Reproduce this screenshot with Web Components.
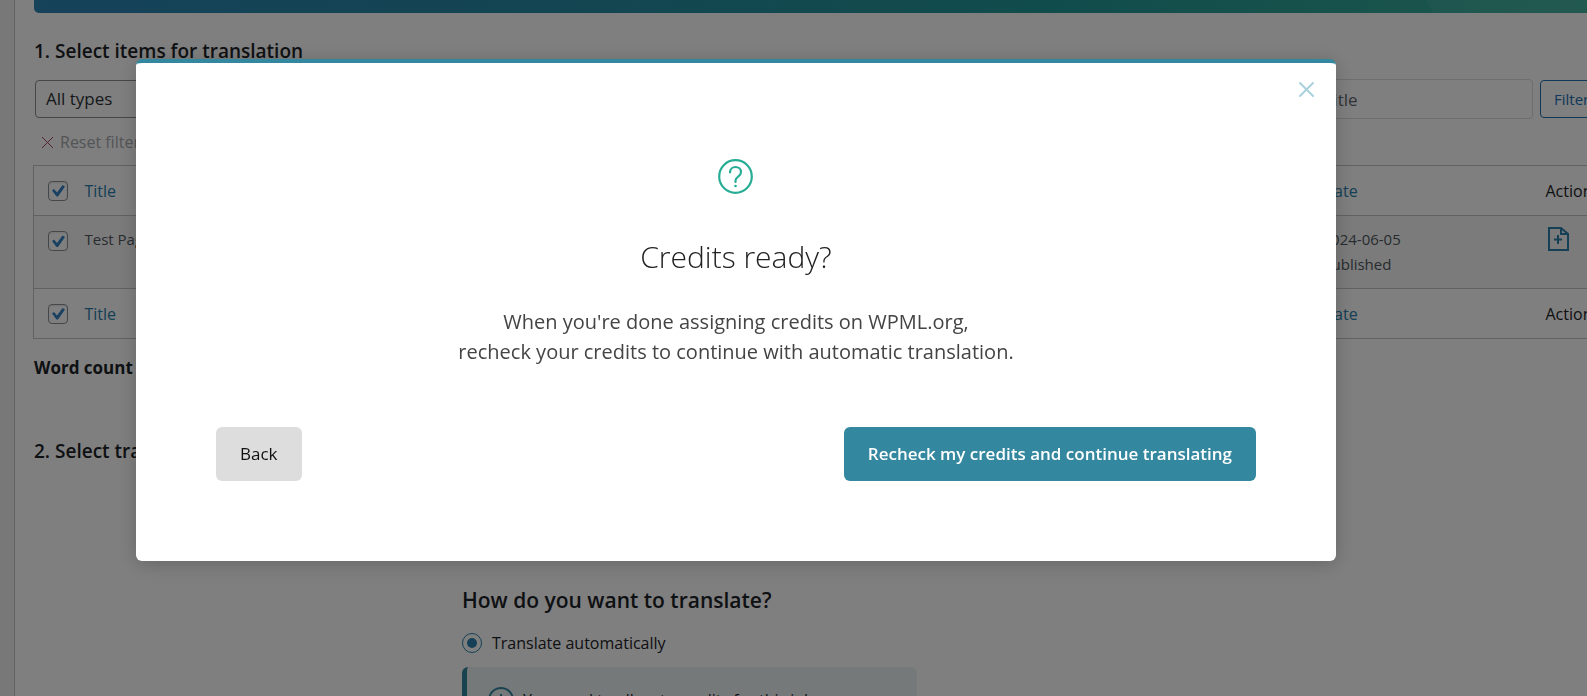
<!DOCTYPE html>
<html lang="en">
<head>
<meta charset="utf-8">
<title>Translation Management</title>
<style>
  html, body {
    margin: 0;
    height: 100%;
    overflow: hidden;
  }
  body {
    background: #f0f0f1;
    color: #1d2327;
    font: 400 16px/24px "Open Sans", "Noto Sans", sans-serif;
  }
</style>
</head>
<body>
<tm-dashboard>
  <tm-section heading="1. Select items for translation">
    <tm-filters></tm-filters>
    <tm-items></tm-items>
  </tm-section>
  <tm-section class="step" heading="2. Select translation">
    <tm-method>
      <tm-notice>You need to allocate credits for this job</tm-notice>
    </tm-method>
  </tm-section>
</tm-dashboard>

<wpml-modal heading="Credits ready?">
  When you're done assigning credits on WPML.org,<br>
  recheck your credits to continue with automatic translation.
  <wpml-button slot="actions">Back</wpml-button>
  <wpml-button slot="actions" variant="primary">Recheck my credits and continue translating</wpml-button>
</wpml-modal>

<script>
class BaseElement extends HTMLElement {
    constructor() {
        super();
        this.attachShadow({ mode: 'open' });
        const template = document.createElement('template');
        template.innerHTML = this.constructor.markup;
        this.shadowRoot.appendChild(template.content.cloneNode(true));
    }
}

class TmDashboard extends BaseElement {
    static markup = `
      <style>
        :host {
          display: flex;
          height: 100%;
          overflow: hidden;
        }
        .gutter {
          flex: 0 0 14px;
          border-right: 1px solid #c3c4c7;
        }
        /* the board is wider than the window, as the item table is */
        main {
          flex: 1;
          min-width: 0;
          margin-right: -48px;
          padding-left: 19px;
          background: #fff;
        }
        .banner {
          height: 13px;
          border-radius: 0 0 5px 5px;
          background:
            linear-gradient(60deg, transparent 87%, rgba(255, 255, 255, 0.05) 87%),
            linear-gradient(90deg, #2c84b4 0%, #278aa5 30%, #239a98 65%, #3db09a 100%);
        }
        ::slotted(.step) {
          margin-top: 59px;
        }
      </style>
      <div class="gutter"></div>
      <main>
        <div class="banner"></div>
        <slot></slot>
      </main>
    `;
}

class TmSection extends BaseElement {
    static markup = `
      <style>
        :host {
          display: block;
          margin-top: 26px;
        }
        h2 {
          margin: 0;
          font-size: 19px;
          font-weight: 600;
          line-height: 24px;
        }
      </style>
      <h2></h2>
      <slot></slot>
    `;

    connectedCallback() {
        this.shadowRoot.querySelector('h2').textContent = this.getAttribute('heading');
    }
}

class TmFilters extends BaseElement {
    static markup = `
      <style>
        :host {
          display: block;
          margin-top: 16px;
        }
        .row {
          display: flex;
          align-items: center;
          gap: 7px;
        }
        select, input, .filter {
          box-sizing: border-box;
          height: 38px;
          border-radius: 4px;
          background: #fff;
          font: inherit;
          font-size: 17px;
        }
        select {
          flex: 1;
          min-width: 0;
          margin-left: 1px;
          padding: 0 10px;
          border: 1px solid #8c8f94;
          color: #2c3338;
          appearance: none;
        }
        input {
          flex: 0 0 220px;
          width: 220px;
          height: 40px;
          padding: 0 10px;
          border: 1px solid #dcdcde;
        }
        input::placeholder {
          color: #646970;
        }
        .filter {
          flex: 0 0 95px;
          padding: 0 13px;
          border: 1px solid #2271b1;
          color: #2271b1;
          font-size: 15px;
          text-align: left;
        }
        .reset {
          display: flex;
          align-items: center;
          gap: 6px;
          margin: 11px 0 0 7px;
          padding: 0;
          border: 0;
          background: none;
          color: #a7aaad;
          font: inherit;
        }
      </style>
      <div class="row">
        <select aria-label="Type"><option>All types</option></select>
        <input type="text" placeholder="Title" aria-label="Title">
        <button class="filter" type="button">Filter</button>
      </div>
      <button class="reset" type="button">
        <svg width="13" height="13" viewBox="0 0 13 13" fill="none" stroke="#a8465a">
          <path d="M1 1l11 11M12 1L1 12"/>
        </svg>
        Reset filters
      </button>
    `;
}

class TmItems extends BaseElement {
    static markup = `
      <style>
        :host {
          display: block;
          margin: 11px 0 0 -1px;
        }
        table {
          width: 100%;
          border: 1px solid #c3c4c7;
          border-collapse: collapse;
          table-layout: fixed;
        }
        .check { width: 51px; }
        .date { width: 223px; }
        .actions { width: 99px; }
        th, td {
          padding: 0 10px;
          text-align: left;
        }
        th {
          height: 49px;
          font-weight: 400;
        }
        th:first-child, td:first-child {
          padding-left: 14px;
          padding-right: 0;
        }
        th:nth-child(2), td:nth-child(2) {
          padding-left: 0;
        }
        td {
          height: 61px;
          padding-top: 11px;
          vertical-align: top;
          color: #50575e;
          font-size: 15px;
          line-height: 25px;
        }
        tbody tr {
          border: solid #c3c4c7;
          border-width: 1px 0;
          background: #f6f7f7;
        }
        a {
          color: #2a80ac;
          text-decoration: none;
        }
        input {
          display: block;
          box-sizing: border-box;
          width: 20px;
          height: 20px;
          margin: 0;
          border: 1px solid #8c8f94;
          border-radius: 4px;
          background: #fff;
          box-shadow: inset 0 1px 2px rgba(0, 0, 0, 0.1);
          appearance: none;
        }
        td input {
          margin-top: 4px;
        }
        input:checked::before {
          content: "";
          display: block;
          width: 18px;
          height: 18px;
          background: #3582c4;
          clip-path: path("M3 9L5 7.5L8 11L13.5 3.5L16 5L9 15H7.5Z");
        }
        td svg {
          display: block;
        }
        .count {
          margin: 17px 0 0 1px;
          font-size: 17px;
          font-weight: 700;
        }
      </style>
      <table>
        <colgroup><col class="check"><col><col class="date"><col class="actions"></colgroup>
        <thead>
          <tr>
            <th><input type="checkbox" checked aria-label="Select all"></th>
            <th><a href="#title">Title</a></th>
            <th><a href="#date">Date</a></th>
            <th>Actions</th>
          </tr>
        </thead>
        <tbody>
          <tr>
            <td><input type="checkbox" checked aria-label="Select Test Page"></td>
            <td>Test Page</td>
            <td>2024-06-05<br>Published</td>
            <td>
              <a href="#add" aria-label="Add note">
                <svg width="24" height="24" viewBox="0 0 24 24" fill="none" stroke="#2a80ac" stroke-width="2">
                  <path d="M3 1h12l7 6v16H3z"/>
                  <path d="M15 1v6h6M12 8v9M8 12.500h8"/>
                </svg>
              </a>
            </td>
          </tr>
        </tbody>
        <tfoot>
          <tr>
            <th><input type="checkbox" checked aria-label="Select all"></th>
            <th><a href="#title">Title</a></th>
            <th><a href="#date">Date</a></th>
            <th>Actions</th>
          </tr>
        </tfoot>
      </table>
      <div class="count">Word count</div>
    `;
}

class TmMethod extends BaseElement {
    static markup = `
      <style>
        :host {
          display: block;
          max-width: 455px;
          margin: 123px 0 0 428px;
        }
        h3 {
          margin: 0;
          font-size: 21px;
          font-weight: 600;
          line-height: 28px;
        }
        label {
          display: flex;
          align-items: center;
          gap: 10px;
          margin: 17px 0 12px;
        }
        input {
          display: grid;
          place-items: center;
          box-sizing: border-box;
          width: 20px;
          height: 20px;
          margin: 0;
          border: 1px solid #2a80ac;
          border-radius: 50%;
          appearance: none;
        }
        input:checked::before {
          content: "";
          width: 10px;
          height: 10px;
          border-radius: 50%;
          background: #2a80ac;
        }
      </style>
      <h3>How do you want to translate?</h3>
      <label><input type="radio" name="method" checked>Translate automatically</label>
      <slot></slot>
    `;
}

class TmNotice extends BaseElement {
    static markup = `
      <style>
        :host {
          display: flex;
          align-items: center;
          gap: 9px;
          padding: 20px 21px;
          border-left: 5px solid #33879e;
          border-radius: 6px;
          background: #eaf3f5;
        }
      </style>
      <svg width="26" height="26" viewBox="0 0 26 26" fill="none" stroke="#33879e" stroke-width="2">
        <circle cx="13" cy="13" r="12"/>
        <path d="M13 7v8M13 17v2"/>
      </svg>
      <span><slot></slot></span>
    `;
}

class WpmlModal extends BaseElement {
    static markup = `
      <style>
        :host {
          position: fixed;
          inset: 0;
          display: flex;
          align-items: flex-start;
          padding: 59px 251px 0 136px;
          background: rgba(0, 0, 0, 0.5);
        }
        .dialog {
          position: relative;
          flex: 1;
          padding: 96px 80px 80px;
          border-top: 4px solid #33879e;
          border-radius: 6px;
          background: #fff;
          box-shadow: 0 3px 20px rgba(0, 0, 0, 0.2);
          text-align: center;
        }
        .close {
          position: absolute;
          top: 14px;
          right: 18px;
          padding: 2px;
          border: 0;
          background: none;
        }
        svg {
          display: block;
          margin: 0 auto;
        }
        h1 {
          margin: 43px 0 30px;
          color: #222;
          font-size: 30px;
          font-weight: 300;
          line-height: 40px;
        }
        p {
          margin: 0 0 60px;
          color: #444;
          font-size: 20px;
          line-height: 30px;
        }
        .actions {
          display: flex;
          justify-content: space-between;
        }
      </style>
      <div class="dialog" role="dialog" aria-modal="true" aria-labelledby="heading">
        <button class="close" type="button" aria-label="Close">
          <svg width="20" height="20" viewBox="0 0 20 20" fill="none" stroke="#a9d0dc" stroke-width="2" stroke-linecap="round">
            <path d="M4 4l13 13M17 4L4 17"/>
          </svg>
        </button>
        <svg width="36" height="35" viewBox="0 0 36 35" fill="none" stroke="#27ad95" stroke-width="2.200" stroke-linecap="round">
          <circle cx="17.500" cy="17.500" r="16.300"/>
          <path d="M12 13.500C12 10 14.500 8 17.500 8S23 10 23 13.200C23 17.500 17.500 17.500 17.500 21.500V23"/>
          <circle cx="17.500" cy="27" r="1.300" fill="#27ad95" stroke="none"/>
        </svg>
        <h1 id="heading"></h1>
        <p><slot></slot></p>
        <div class="actions"><slot name="actions"></slot></div>
      </div>
    `;

    connectedCallback() {
        this.shadowRoot.querySelector('h1').textContent = this.getAttribute('heading');
    }
}

class WpmlButton extends BaseElement {
    static markup = `
      <style>
        :host {
          display: block;
        }
        button {
          padding: 15px 24px;
          border: 0;
          border-radius: 6px;
          background: #ddd;
          color: #111;
          font: inherit;
          font-size: 17px;
          cursor: pointer;
        }
        :host([variant="primary"]) button {
          background: #33879e;
          color: #fff;
          font-weight: 600;
        }
      </style>
      <button type="button"><slot></slot></button>
    `;
}

customElements.define('tm-dashboard', TmDashboard);
customElements.define('tm-section', TmSection);
customElements.define('tm-filters', TmFilters);
customElements.define('tm-items', TmItems);
customElements.define('tm-method', TmMethod);
customElements.define('tm-notice', TmNotice);
customElements.define('wpml-modal', WpmlModal);
customElements.define('wpml-button', WpmlButton);
</script>
</body>
</html>
